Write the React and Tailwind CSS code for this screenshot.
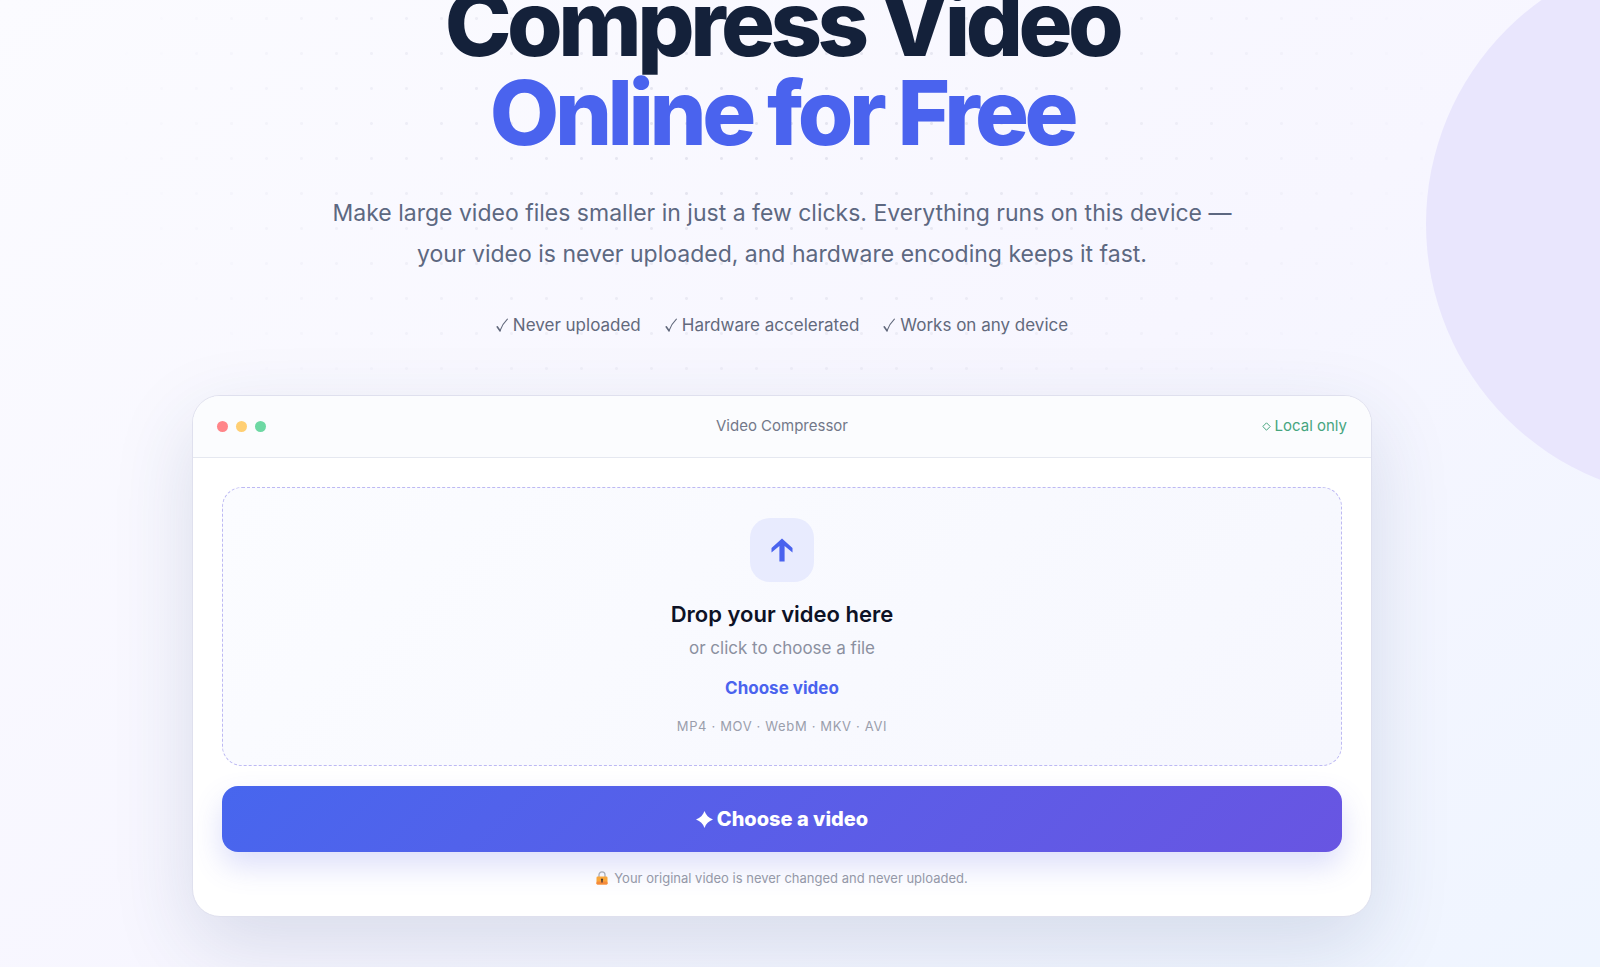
import React, { useRef } from 'react';

const perks = ['Never uploaded', 'Hardware accelerated', 'Works on any device'];

const CheckMark = () => (
  <svg width="13" height="15" viewBox="0 0 13 15" fill="none" stroke="currentColor" strokeLinecap="round" aria-hidden="true">
    <path d="M1.2 8.8 L4 12.8" strokeWidth="1.6" />
    <path d="M4 12.8 C5.5 8.5 8 4.5 11.4 1.2" strokeWidth="1.1" />
  </svg>
);

const UpArrow = () => (
  <svg width="22" height="24" viewBox="0 0 22 24" fill="currentColor" aria-hidden="true">
    <path d="M11 0.5 L21.5 10 V14.5 L13.6 8 V23.5 H8.4 V8 L0.5 14.5 V10 Z" />
  </svg>
);

const Sparkle = () => (
  <svg width="17" height="17" viewBox="0 0 17 17" fill="currentColor" aria-hidden="true">
    <path d="M8.5 0 C10 4.2 12.6 6.9 17 8.5 C12.6 10.1 10 12.8 8.5 17 C7 12.8 4.4 10.1 0 8.5 C4.4 6.9 7 4.2 8.5 0 Z" />
  </svg>
);

const Diamond = () => (
  <svg width="9" height="9" viewBox="0 0 9 9" fill="none" stroke="currentColor" aria-hidden="true">
    <path d="M4.5 0.8 L8.2 4.5 L4.5 8.2 L0.8 4.5 Z" />
  </svg>
);

const Lock = () => (
  <svg width="12" height="14" viewBox="0 0 12 14" fill="none" aria-hidden="true">
    <path d="M3 6 V3.8 A3 3 0 0 1 9 3.8 V6" stroke="#a9adb8" strokeWidth="1.3" />
    <rect x="0.5" y="5.5" width="11" height="8" rx="1.2" fill="#f9a63a" />
    <rect x="0.5" y="10.5" width="11" height="3" rx="1.2" fill="#f58a3c" />
    <path d="M6 7.5 a1.2 1.2 0 0 1 0.7 2.1 V11.6 H5.3 V9.6 A1.2 1.2 0 0 1 6 7.5 Z" fill="#4b3a35" />
  </svg>
);

const Backdrop = () => (
  <div className="pointer-events-none absolute inset-0" aria-hidden="true">
    <div className="absolute inset-x-0 top-0 h-[390px] bg-[radial-gradient(circle,#e5e5f0_1px,transparent_2px)] bg-[size:35px_35px] bg-[position:4px_1px] [mask-image:radial-gradient(ellipse_680px_420px_at_782px_130px,black_20%,transparent)]" />
    <div className="absolute -right-[376px] -top-[51px] size-[550px] rounded-full bg-[#e9e6fd]" />
  </div>
);

const Hero = () => (
  <header className="flex flex-col items-center text-center">
    <h1 className="-mt-[21px] text-[90px] leading-[89px] font-extrabold tracking-tighter text-[#14213a]">
      Compress Video
      <span className="block text-[#4a63ee]">Online for Free</span>
    </h1>
    <p className="mt-9 max-w-[940px] text-[23px] leading-[41px] text-[#5d6881]">
      Make large video files smaller in just a few clicks. Everything runs on this device — your video is never
      uploaded, and hardware encoding keeps it fast.
    </p>
    <ul className="mt-9 flex flex-wrap justify-center gap-6 text-[17px] leading-7 text-[#62697c]">
      {perks.map((perk) => (
        <li key={perk} className="flex items-center gap-1">
          <CheckMark />
          {perk}
        </li>
      ))}
    </ul>
  </header>
);

const Compressor = () => {
  const fileInput = useRef(null);
  const pickFile = () => fileInput.current.click();

  return (
    <section className="mt-14 w-full max-w-[1180px] overflow-hidden rounded-[28px] border border-[#dfe0ee] bg-white shadow-[0_28px_80px_rgba(40,65,115,0.15)]">
      <div className="grid h-[62px] grid-cols-3 items-center border-b border-[#e5e8f0] bg-[#fbfcfe] px-6">
        <div className="flex gap-2">
          <span className="size-[11px] rounded-full bg-[#ff8589]" />
          <span className="size-[11px] rounded-full bg-[#ffcf73]" />
          <span className="size-[11px] rounded-full bg-[#6dd8a3]" />
        </div>
        <h2 className="text-center text-[15px] text-[#727889]">Video Compressor</h2>
        <p className="flex items-center justify-end gap-1 text-[15px] text-[#46a57e]">
          <Diamond />
          Local only
        </p>
      </div>
      <div className="px-[29px] pt-[29px] pb-7">
        <div className="flex flex-col items-center rounded-[20px] border border-dashed border-[#bdb9f3] bg-linear-135 from-[#fbfcff] to-[#f6f7fe] pt-[30px] pb-[27px]">
          <div className="grid size-16 place-items-center rounded-[20px] bg-[#e8ebfe] text-[#4a63ee]">
            <UpArrow />
          </div>
          <h3 className="mt-4 text-[22px] leading-8 font-semibold text-[#0d1226]">Drop your video here</h3>
          <p className="mt-1 text-[17px] leading-7 text-[#8b90a0]">or click to choose a file</p>
          <button type="button" onClick={pickFile} className="mt-3 text-[17px] leading-7 font-bold text-[#4a63ee]">
            Choose video
          </button>
          <input ref={fileInput} type="file" accept="video/*" aria-label="Video file" className="hidden" />
          <p className="mt-3 text-[13px] leading-6 tracking-wider text-[#9a9eac]">MP4 · MOV · WebM · MKV · AVI</p>
        </div>
        <button
          type="button"
          onClick={pickFile}
          className="mt-5 flex h-[66px] w-full items-center justify-center gap-1 rounded-2xl bg-linear-135 from-[#4766ee] to-[#6855e2] text-xl font-extrabold text-white shadow-[0_14px_30px_rgba(80,90,230,0.2)]"
        >
          <Sparkle />
          Choose a video
        </button>
        <p className="mt-4 flex items-center justify-center gap-1.5 text-[13px] leading-5 text-[#9498a8]">
          <Lock />
          Your original video is never changed and never uploaded.
        </p>
      </div>
    </section>
  );
};

const App = () => {
  return (
    <div className="relative flow-root min-h-screen overflow-hidden bg-linear-145 from-[#fbfbff] via-[#f7f6ff] via-55% to-[#eff5ff] font-['Inter','Liberation_Sans',sans-serif]">
      <Backdrop />
      <main className="relative flex flex-col items-center pr-9 pb-12">
        <Hero />
        <Compressor />
      </main>
    </div>
  );
};

export default App;
